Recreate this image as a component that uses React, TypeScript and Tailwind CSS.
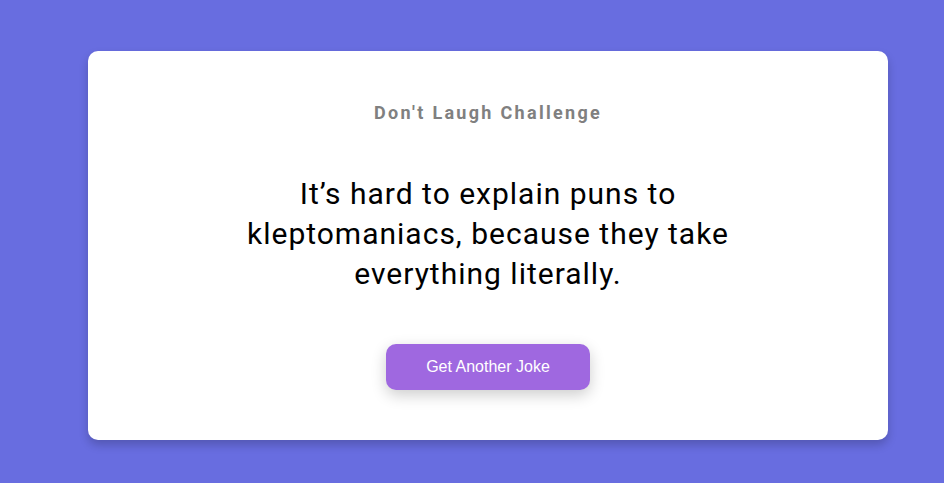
import React, { useState } from "react";

const jokes = [
  "It\u2019s hard to explain puns to kleptomaniacs, because they take everything literally.",
  "I used to play piano by ear, but now I use my hands.",
];

const App = () => {
  const [i, setI] = useState(0);

  return (
    <div className="min-h-[483px] w-full bg-[#686de0] pt-[51px] pb-[43px]">
      <div className="ml-[88px] flex w-[800px] flex-col items-center rounded-[10px] bg-white px-[50px] py-[50px] text-center shadow-[0_5px_10px_rgba(0,0,0,0.2)]">
        <h3 className="font-['Roboto',sans-serif] text-[18px] leading-6 font-bold tracking-[2.3px] text-[#808080]">
          Don't Laugh Challenge
        </h3>
        <p className="mt-[49px] max-w-[500px] font-['Roboto',sans-serif] text-[30px] leading-[40px] tracking-[1px] text-black">
          {jokes[i]}
        </p>
        <button
          onClick={() => setI((i + 1) % jokes.length)}
          className="mt-[50px] h-[46px] w-[204px] rounded-[10px] bg-[#9f68e0] font-['Liberation_Sans',Arial,sans-serif] text-base text-white shadow-[0_5px_15px_rgba(0,0,0,0.2)]"
        >
          Get Another Joke
        </button>
      </div>
    </div>
  );
};

export default App;
